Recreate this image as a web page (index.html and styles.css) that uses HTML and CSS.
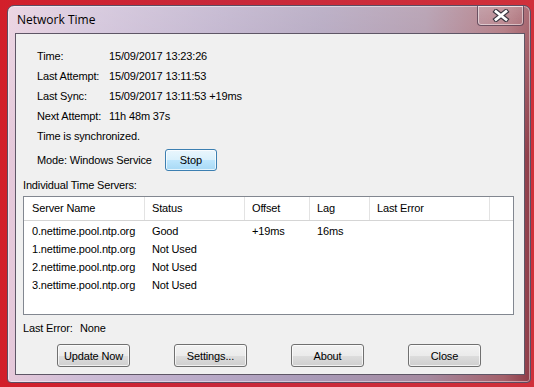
FILE: index.html
```html
<!DOCTYPE html>
<html>
<head>
<meta charset="utf-8">
<link rel="stylesheet" href="styles.css">
</head>
<body>
<div class="window">
  <div class="titlebar">
    <span class="title">Network Time</span>
    <div class="close-btn">
      <svg width="18" height="13" viewBox="0 0 18 13">
        <path d="M4 2.5 L14 10.5 M14 2.5 L4 10.5" stroke="#3a3640" stroke-width="5" stroke-linecap="square" fill="none"/>
        <path d="M4 2.5 L14 10.5 M14 2.5 L4 10.5" stroke="#ffffff" stroke-width="2.8" stroke-linecap="square" fill="none"/>
      </svg>
    </div>
  </div>
  <div class="client">
    <div class="info">
      <span>Time:</span><span>15/09/2017 13:23:26</span>
      <span>Last Attempt:</span><span>15/09/2017 13:11:53</span>
      <span>Last Sync:</span><span>15/09/2017 13:11:53 +19ms</span>
      <span>Next Attempt:</span><span>11h 48m 37s</span>
      <span class="span2">Time is synchronized.</span>
    </div>
    <div class="mode">
      <span>Mode: Windows Service</span>
      <button class="btn btn-default stop">Stop</button>
    </div>
    <div class="section-label">Individual Time Servers:</div>
    <div class="listview">
      <div class="lv-header">
        <div class="hcell">Server Name</div>
        <div class="hcell">Status</div>
        <div class="hcell">Offset</div>
        <div class="hcell">Lag</div>
        <div class="hcell">Last Error</div>
      </div>
      <div class="lv-body">
        <div class="lv-row"><span>0.nettime.pool.ntp.org</span><span>Good</span><span>+19ms</span><span>16ms</span><span></span></div>
        <div class="lv-row"><span>1.nettime.pool.ntp.org</span><span>Not Used</span><span></span><span></span><span></span></div>
        <div class="lv-row"><span>2.nettime.pool.ntp.org</span><span>Not Used</span><span></span><span></span><span></span></div>
        <div class="lv-row"><span>3.nettime.pool.ntp.org</span><span>Not Used</span><span></span><span></span><span></span></div>
      </div>
    </div>
    <div class="last-error"><span class="le-label">Last Error:</span><span>None</span></div>
    <div class="buttons">
      <button class="btn">Update Now</button>
      <button class="btn">Settings...</button>
      <button class="btn">About</button>
      <button class="btn">Close</button>
    </div>
  </div>
</div>
</body>
</html>
```
FILE: styles.css
```css
html, body {
  margin: 0;
  padding: 0;
}
body {
  width: 534px;
  height: 387px;
  overflow: hidden;
  background: linear-gradient(to right, #d21f2a 0%, #c8283a 40%, #d0303a 100%);
  font-family: "Liberation Sans", Arial, sans-serif;
  font-size: 11px;
  letter-spacing: -0.15px;
  color: #000;
  display: flex;
  padding: 5px 3px 4px 7px;
  box-sizing: border-box;
}
.window {
  flex: 1;
  display: flex;
  flex-direction: column;
  border: 1px solid #5c4d62;
  border-radius: 7px 7px 4px 4px;
  padding: 0 5px 7px 7px;
  background:
    linear-gradient(to bottom, rgba(255,255,255,0.25) 0%, rgba(255,255,255,0) 40%),
    linear-gradient(to right, #e6c9da 0%, #cdbcd6 15%, #b7a8c6 40%, #a899b6 60%, #a58aa0 80%, #a4606a 95%, #8f3c48 100%);
  box-shadow: inset 0 0 0 1px rgba(255,255,255,0.45);
}
.titlebar {
  height: 27px;
  display: flex;
  justify-content: space-between;
  align-items: flex-start;
}
.title {
  font-family: "Open Sans", "Noto Sans", sans-serif;
  font-size: 12px;
  letter-spacing: 0;
  padding: 6px 0 0 2px;
  line-height: 16px;
}
.close-btn {
  width: 45px;
  height: 19px;
  border: 1px solid rgba(70,50,70,0.7);
  border-top: none;
  border-radius: 0 0 4px 4px;
  box-shadow: inset 0 0 0 1px rgba(255,255,255,0.5);
  background: linear-gradient(to bottom, rgba(255,255,255,0.15), rgba(255,255,255,0.05));
  display: flex;
  align-items: center;
  justify-content: center;
  margin-right: 1px;
}
.client {
  flex: 1;
  background: #f0f0f0;
  border: 1px solid #5e5666;
  display: flex;
  flex-direction: column;
  padding: 0 5px 0 7px;
}
.info {
  display: grid;
  grid-template-columns: 72px auto;
  grid-auto-rows: 20px;
  line-height: 20px;
  padding: 12px 0 0 14px;
}
.span2 {
  grid-column: 1 / span 2;
}
.mode {
  display: flex;
  align-items: center;
  height: 24px;
  margin-top: 2px;
  padding-left: 14px;
  gap: 13px;
}
.btn {
  font-family: "Liberation Sans", Arial, sans-serif;
  font-size: 11px;
  letter-spacing: -0.15px;
  color: #000;
  width: 73px;
  height: 23px;
  padding: 0;
  border: 1px solid #707070;
  border-radius: 3px;
  background: linear-gradient(to bottom, #f2f2f2 0%, #ebebeb 50%, #dddddd 51%, #cfcfcf 100%);
  box-shadow: inset 0 0 0 1px rgba(255,255,255,0.7);
}
.btn-default {
  border-color: #3c7fb1;
  background: linear-gradient(to bottom, #eaf6fd 0%, #d9f0fc 50%, #bee6fd 51%, #a7d9f5 100%);
}
.stop {
  width: 52px;
  height: 22px;
}
.section-label {
  line-height: 14px;
  margin-top: 6px;
}
.listview {
  margin-top: 4px;
  height: 119px;
  box-sizing: border-box;
  border: 1px solid #828790;
  background: #fff;
  margin-right: 5px;
}
.lv-header,
.lv-row {
  display: grid;
  grid-template-columns: 121px 100px 65px 60px 120px;
}
.lv-header {
  height: 23px;
  border-bottom: 1px solid #d5d5d5;
  line-height: 23px;
}
.hcell {
  padding-left: 7px;
  border-right: 1px solid #e3e3e3;
  white-space: nowrap;
}
.hcell:first-child {
  padding-left: 8px;
}
.lv-body {
  padding-top: 1px;
}
.lv-row {
  height: 18px;
  line-height: 18px;
}
.lv-row span {
  padding-left: 7px;
  white-space: nowrap;
}
.lv-row span:first-child {
  padding-left: 8px;
}
.last-error {
  display: flex;
  line-height: 14px;
  margin-top: 6px;
}
.le-label {
  width: 57px;
}
.buttons {
  display: flex;
  gap: 44px;
  padding-left: 34px;
  margin-top: 9px;
}
```
